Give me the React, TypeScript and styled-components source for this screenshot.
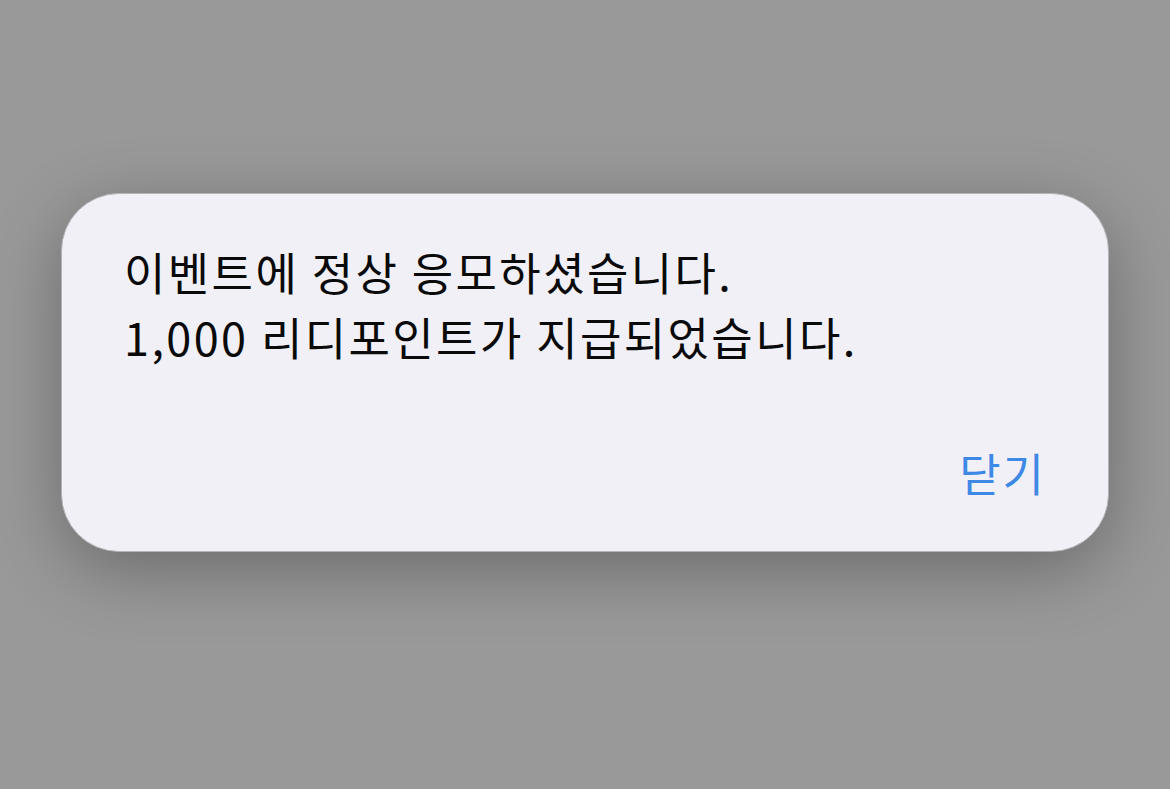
import styled, { createGlobalStyle } from 'styled-components';

const GlobalStyle = createGlobalStyle`
  html, body {
    margin: 0;
    padding: 0;
    background: #999999;
  }
  body {
    font-family: "Noto Sans CJK KR", "Noto Sans", sans-serif;
  }
`;

const Backdrop = styled.div`
  width: 100%;
  height: 789px;
  display: flex;
  justify-content: center;
  align-items: flex-start;
  padding-top: 193px;
  box-sizing: border-box;
  background: #999999;
`;

const AlertBox = styled.div`
  width: 1048px;
  height: 359px;
  box-sizing: border-box;
  display: flex;
  flex-direction: column;
  justify-content: space-between;
  padding: 45px 62px 50px 62px;
  background: #f0f0f6;
  border: 1px solid #b4b4b8;
  border-radius: 58px;
  box-shadow: 0 18px 70px rgba(0, 0, 0, 0.3);
`;

const Message = styled.p`
  margin: 0;
  font-size: 45px;
  line-height: 65px;
  letter-spacing: 2.4px;
  color: #0a0a0a;
`;

const Actions = styled.div`
  display: flex;
  justify-content: flex-end;
`;

const TextButton = styled.button`
  border: none;
  background: none;
  padding: 0;
  font-family: inherit;
  font-size: 45px;
  line-height: 56px;
  letter-spacing: 2px;
  color: #3e88e6;
  cursor: pointer;
`;

export default function App() {
  return (
    <>
      <GlobalStyle />
      <Backdrop>
        <AlertBox role="alertdialog">
          <Message>
            이벤트에 정상 응모하셨습니다.
            <br />
            1,000 리디포인트가 지급되었습니다.
          </Message>
          <Actions>
            <TextButton>닫기</TextButton>
          </Actions>
        </AlertBox>
      </Backdrop>
    </>
  );
}
